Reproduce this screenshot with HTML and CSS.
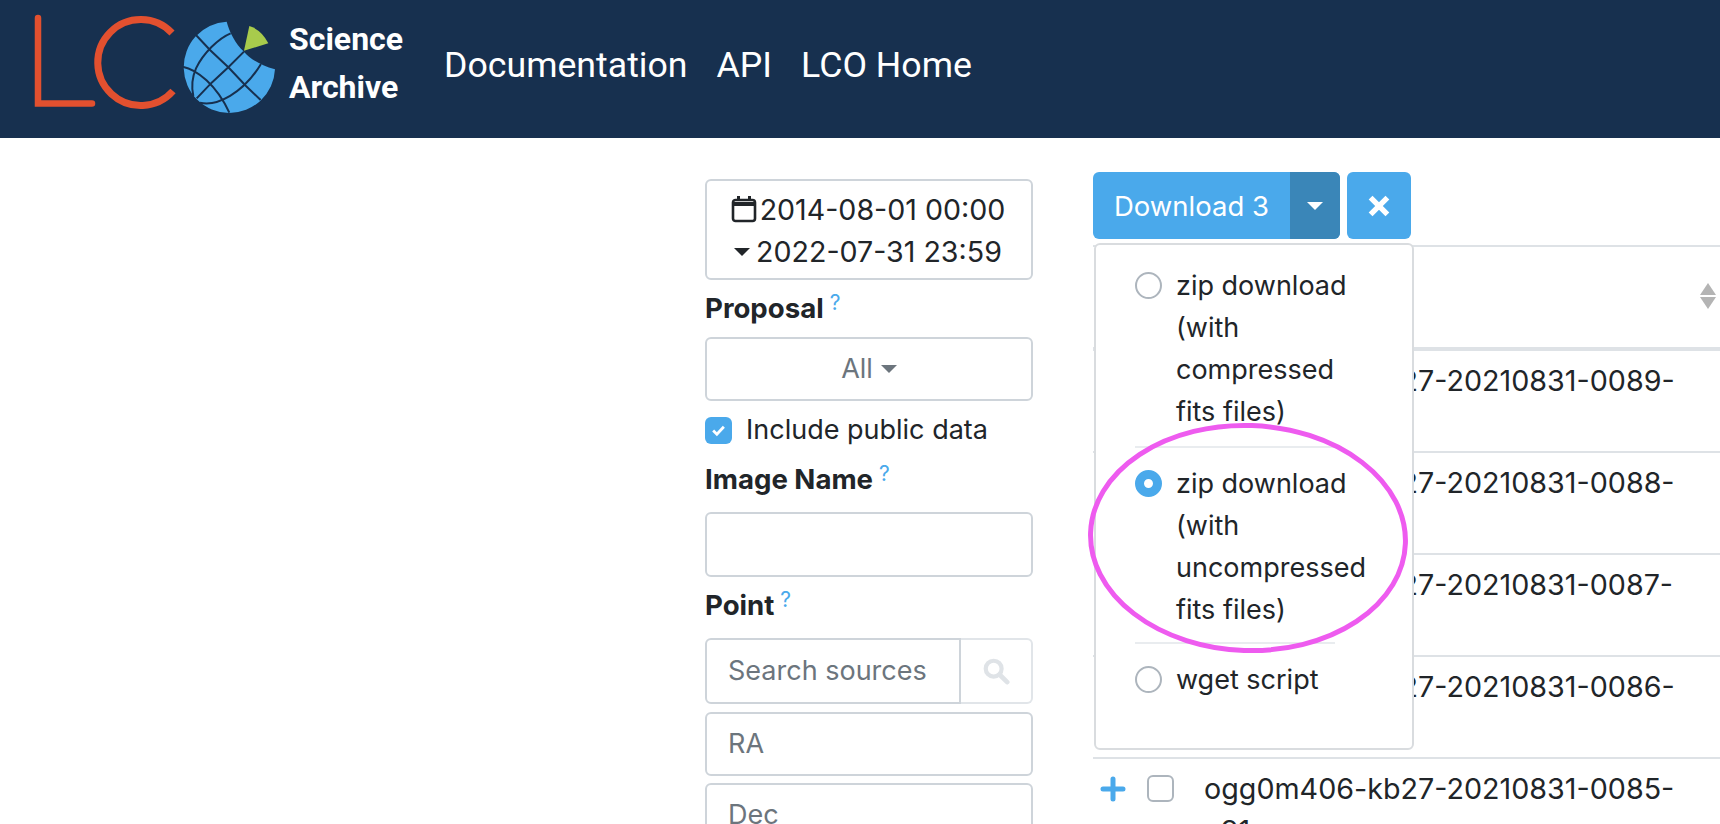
FILE: index.html
```html
<!DOCTYPE html>
<html lang="en">
<head>
<meta charset="utf-8">
<title>LCO Science Archive</title>
<link rel="stylesheet" href="styles.css">
</head>
<body>
<header class="topbar">
  <svg class="logo" viewBox="0 0 290 138" width="290" height="138" aria-hidden="true">
    <path d="M38 18V103.500H92" fill="none" stroke="#e2502f" stroke-width="6.500" stroke-linecap="round"/>
    <path d="M172 33A43 43 0 1 0 173 91" fill="none" stroke="#e2502f" stroke-width="7"/>
    <g transform="translate(160 10) scale(0.3333)">
      <path d="M200 35A137 137 0 1 0 345 178C300 165 268 145 252 125C225 100 208 65 200 35Z" fill="#4aa9eb"/>
      <path d="M268 48Q305 60 325 100L252 122Z" fill="#a8cb4c"/>
      <g fill="none" stroke="#17304f" stroke-width="6">
        <path d="M105 72L150 120L205 172L258 228L302 270"/>
        <path d="M252 125L205 172L155 218L110 265"/>
        <path d="M212 70C175 85 130 130 108 175C95 205 95 235 100 258"/>
        <path d="M68 170C110 178 170 225 208 308"/>
        <path d="M120 278C170 290 250 250 303 162"/>
      </g>
    </g>
  </svg>
  <div class="brand"><span>Science</span><span>Archive</span></div>
  <nav class="nav"><a>Documentation</a><a>API</a><a>LCO Home</a></nav>
</header>
<main class="page">
  <aside class="filters">
    <div class="box datebox">
      <div class="dateline"><svg class="cal" viewBox="0 0 26 28" width="26" height="28"><rect x="2" y="5" width="22" height="21" rx="2.5" fill="none" stroke="#212529" stroke-width="2.6"/><path d="M2 9H24" stroke="#212529" stroke-width="4"/><path d="M7.500 1V6M18.500 1V6" stroke="#212529" stroke-width="3"/></svg><span>2014-08-01 00:00</span></div>
      <div class="dateline"><i class="caret dark"></i><span>2022-07-31 23:59</span></div>
    </div>
    <div class="label first">Proposal<sup>?</sup></div>
    <div class="box select">All<i class="caret grey"></i></div>
    <div class="check"><span class="tick"><svg viewBox="0 0 14 12" width="15" height="13"><path d="M2 6L5.500 9.500L12 2.500" fill="none" stroke="#fff" stroke-width="2.600"/></svg></span>Include public data</div>
    <div class="label">Image Name<sup>?</sup></div>
    <div class="box field"></div>
    <div class="label">Point<sup>?</sup></div>
    <div class="search">
      <div class="box field ph joined">Search sources</div>
      <div class="addon"><svg viewBox="0 0 30 30" width="28" height="28"><circle cx="12.500" cy="12.500" r="8.500" fill="none" stroke="#dfe3e7" stroke-width="4.500"/><path d="M19 19L27 27" stroke="#dfe3e7" stroke-width="5" stroke-linecap="round"/></svg></div>
    </div>
    <div class="box field ph slim">RA</div>
    <div class="box field ph slim">Dec</div>
  </aside>
  <section class="results">
    <div class="toolbar">
      <div class="split"><span class="dl">Download 3</span><span class="dltoggle"><i class="caret white"></i></span></div>
      <span class="close"><svg viewBox="0 0 20 20" width="24" height="24"><path d="M3 3L17 17M17 3L3 17" stroke="#fff" stroke-width="4.500"/></svg></span>
    </div>
    <div class="tablewrap">
      <div class="thead"><span class="sort"><i></i><i></i></span></div>
      <div class="row"><span class="name">ogg0m406-kb27-20210831-0089-<br>e91</span></div>
      <div class="row"><span class="name">ogg0m406-kb27-20210831-0088-<br>e91</span></div>
      <div class="row"><span class="name">ogg0m406-kb27-20210831-0087-<br>e91</span></div>
      <div class="row"><span class="name">ogg0m406-kb27-20210831-0086-<br>e91</span></div>
      <div class="row">
        <svg class="plus" viewBox="0 0 26 26" width="26" height="26"><path d="M13 3V23M3 13H23" stroke="#4aa9eb" stroke-width="5" stroke-linecap="round"/></svg>
        <span class="rowcheck"></span>
        <span class="name">ogg0m406-kb27-20210831-0085-<br>e91</span>
      </div>
      <div class="menu">
        <div class="opt"><span class="radio"></span><span>zip download (with compressed fits files)</span></div>
        <hr class="sep">
        <div class="opt mid"><span class="radio on"></span><span>zip download (with uncompressed fits files)</span></div>
        <hr class="sep">
        <div class="opt last"><span class="radio"></span><span>wget script</span></div>
      </div>
    </div>
    <svg class="mark" viewBox="0 0 330 240" width="330" height="240" aria-hidden="true"><ellipse cx="165" cy="120" rx="157.500" ry="112.500" transform="rotate(2 165 120)" fill="none" stroke="#ee5bef" stroke-width="5"/></svg>
  </section>
</main>
</body>
</html>
```
FILE: styles.css
```css
* { box-sizing: border-box; }
html, body { margin: 0; height: 824px; overflow: hidden; background: #fff; }
body { font-family: Inter, "Noto Sans", sans-serif; font-size: 27px; line-height: 42px; color: #212529; }
.topbar { height: 138px; background: #17304f; display: flex; align-items: center; }
.logo { flex: none; }
.brand { display: flex; flex-direction: column; font-family: Roboto, sans-serif; font-weight: 700; font-size: 32px; line-height: 48px; color: #fff; margin: -12px 0 0 -1px; }
.nav { display: flex; gap: 29px; margin-left: 41px; font-family: Roboto, sans-serif; font-size: 35.700px; color: #fff; margin-top: -9px; }
.page { display: flex; padding: 41px 0 0 705px; position: relative; }
.filters { width: 328px; flex: none; }
.box { border: 2px solid #ced4da; border-radius: 6px; background: #fff; }
.datebox { height: 101px; padding: 8px 2px 0 0; text-align: center; font-size: 28.600px; }
.dateline { display: flex; justify-content: center; align-items: center; gap: 3px; height: 42px; }
.cal { flex: none; margin-top: -2px; }
.caret { display: inline-block; width: 0; height: 0; border-left: 8px solid transparent; border-right: 8px solid transparent; border-top: 8px solid #212529; }
.caret.dark { margin-right: 3px; }
.caret.grey { border-top-color: #6c757d; margin-left: 8px; }
.caret.white { border-top-color: #fff; }
.label { font-weight: 700; font-size: 27.600px; height: 61px; padding-top: 7px; line-height: 42px; }
.label.first { height: 57px; }
.label sup { color: #4aa9eb; font-weight: 400; font-size: 21px; line-height: 0; margin-left: 6px; vertical-align: 8px; }
.select { height: 64px; display: flex; align-items: center; justify-content: center; color: #6c757d; }
.check { display: flex; align-items: center; height: 42px; margin-top: 8px; }
.tick { width: 27px; height: 27px; border-radius: 6px; background: #4aa9eb; display: flex; align-items: center; justify-content: center; margin-right: 14px; }
.field { height: 65px; }
.ph { color: #6c757d; display: flex; align-items: center; padding-left: 21px; }
.search { display: flex; height: 66px; margin-bottom: 8px; }
.joined { flex: 1; height: 66px; border-radius: 6px 0 0 6px; }
.addon { width: 72px; border: 2px solid #e1e5e9; border-left: none; border-radius: 0 6px 6px 0; display: flex; align-items: center; justify-content: center; }
.slim { height: 64px; margin-bottom: 7px; }
.results { width: 627px; margin: -7px 0 0 60px; flex: none; position: relative; }
.toolbar { display: flex; gap: 7px; height: 67px; }
.split { display: flex; width: 247px; height: 67px; border-radius: 6px; overflow: hidden; background: #4aa9eb; color: #fff; font-size: 27.500px; }
.dl { flex: 1; display: flex; align-items: center; justify-content: center; }
.dltoggle { width: 50px; background: #3a86b8; display: flex; align-items: center; justify-content: center; }
.close { width: 64px; height: 67px; border-radius: 6px; background: #4aa9eb; display: flex; align-items: center; justify-content: center; }
.tablewrap { position: relative; margin-top: 6px; border-top: 2px solid #dee2e6; }
.thead { height: 104px; border-bottom: 4px solid #dee2e6; position: relative; }
.sort { position: absolute; right: 4px; top: 36px; display: flex; flex-direction: column; gap: 2px; }
.sort i { width: 0; height: 0; border-left: 8.500px solid transparent; border-right: 8.500px solid transparent; }
.sort i:first-child { border-bottom: 12px solid #b4b4b4; }
.sort i:last-child { border-top: 12px solid #b4b4b4; }
.row { height: 102px; border-bottom: 2px solid #dee2e6; position: relative; padding: 9px 0 0 111px; font-size: 28.700px; }
.plus { position: absolute; left: 7px; top: 17px; }
.rowcheck { position: absolute; left: 54px; top: 16px; width: 27px; height: 27px; border: 2px solid #adb5bd; border-radius: 6px; }
.menu { position: absolute; left: 1px; top: -4px; width: 320px; height: 507px; background: #fff; border: 2px solid #d9dcdf; border-radius: 6px; padding: 20px 41px 0 39px; }
.opt { display: flex; gap: 14px; padding-bottom: 13px; }
.opt.mid { padding: 15px 0 11px; }
.opt.last { padding-top: 15px; }
.sep { width: 200px; height: 2px; margin: 0; border: none; background: #e9ecef; }
.radio { flex: none; width: 27px; height: 27px; border-radius: 50%; border: 2px solid #adb5bd; margin-top: 7px; }
.radio.on { border: 9px solid #4aa9eb; background: #fff; }
.mark { position: absolute; left: -10px; top: 246px; pointer-events: none; }
```
